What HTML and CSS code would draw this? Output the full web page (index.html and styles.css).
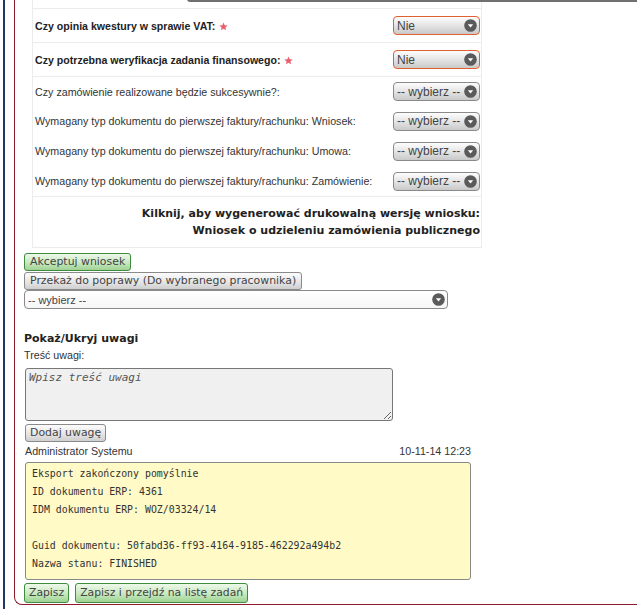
FILE: index.html
```html
<!DOCTYPE html>
<html lang="pl">
    <head>
        <meta charset="UTF-8" />
        <link rel="stylesheet" href="styles.css">
        <title>Wniosek o udzielenie zamówienia publicznego</title>
    </head>

    <body>
        <div class="page">
            <section class="panel">
                <div class="fields">
                    <div class="row cut"><div class="cut-field"></div></div>
                    <div class="row tall sep">
                        <span class="label strong">Czy opinia kwestury w sprawie VAT:
                            <svg class="req" width="9" height="9" viewBox="0 0 10 10"><path d="M5 0.5 6.3 3.6 9.6 3.8 7.1 6 7.9 9.3 5 7.5 2.1 9.3 2.9 6 0.4 3.8 3.7 3.6Z" /></svg>
                        </span>
                        <span class="select invalid">Nie<svg class="arrow" width="13" height="13" viewBox="0 0 13 13"><circle cx="6.5" cy="6.5" r="6.3" /><path d="M3.8 5.2h5.4L6.5 8.4Z" /></svg></span>
                    </div>
                    <div class="row tall sep">
                        <span class="label strong">Czy potrzebna weryfikacja zadania finansowego:
                            <svg class="req" width="9" height="9" viewBox="0 0 10 10"><path d="M5 0.5 6.3 3.6 9.6 3.8 7.1 6 7.9 9.3 5 7.5 2.1 9.3 2.9 6 0.4 3.8 3.7 3.6Z" /></svg>
                        </span>
                        <span class="select invalid">Nie<svg class="arrow" width="13" height="13" viewBox="0 0 13 13"><circle cx="6.5" cy="6.5" r="6.3" /><path d="M3.8 5.2h5.4L6.5 8.4Z" /></svg></span>
                    </div>
                    <div class="row sep">
                        <span class="label">Czy zamówienie realizowane będzie sukcesywnie?:</span>
                        <span class="select">-- wybierz --<svg class="arrow" width="13" height="13" viewBox="0 0 13 13"><circle cx="6.5" cy="6.5" r="6.3" /><path d="M3.8 5.2h5.4L6.5 8.4Z" /></svg></span>
                    </div>
                    <div class="row">
                        <span class="label">Wymagany typ dokumentu do pierwszej faktury/rachunku: Wniosek:</span>
                        <span class="select">-- wybierz --<svg class="arrow" width="13" height="13" viewBox="0 0 13 13"><circle cx="6.5" cy="6.5" r="6.3" /><path d="M3.8 5.2h5.4L6.5 8.4Z" /></svg></span>
                    </div>
                    <div class="row">
                        <span class="label">Wymagany typ dokumentu do pierwszej faktury/rachunku: Umowa:</span>
                        <span class="select">-- wybierz --<svg class="arrow" width="13" height="13" viewBox="0 0 13 13"><circle cx="6.5" cy="6.5" r="6.3" /><path d="M3.8 5.2h5.4L6.5 8.4Z" /></svg></span>
                    </div>
                    <div class="row">
                        <span class="label">Wymagany typ dokumentu do pierwszej faktury/rachunku: Zamówienie:</span>
                        <span class="select">-- wybierz --<svg class="arrow" width="13" height="13" viewBox="0 0 13 13"><circle cx="6.5" cy="6.5" r="6.3" /><path d="M3.8 5.2h5.4L6.5 8.4Z" /></svg></span>
                    </div>
                    <div class="row print sep">
                        <p>Kilknij, aby wygenerować drukowalną wersję wniosku:</p>
                        <p>Wniosek o udzieleniu zamówienia publicznego</p>
                    </div>
                </div>

                <div class="actions">
                    <button class="btn green">Akceptuj wniosek</button>
                    <button class="btn">Przekaż do poprawy (Do wybranego pracownika)</button>
                    <span class="select wide">-- wybierz --<svg class="arrow" width="13" height="13" viewBox="0 0 13 13"><circle cx="6.5" cy="6.5" r="6.3" /><path d="M3.8 5.2h5.4L6.5 8.4Z" /></svg></span>
                </div>

                <h3 class="notes-title">Pokaż/Ukryj uwagi</h3>
                <p class="notes-label">Treść uwagi:</p>
                <textarea class="note-input" placeholder="Wpisz treść uwagi"></textarea>
                <button class="btn add-note">Dodaj uwagę</button>

                <div class="note">
                    <div class="note-head">
                        <span>Administrator Systemu</span>
                        <span>10-11-14 12:23</span>
                    </div>
                    <div class="note-body">Eksport zakończony pomyślnie
ID dokumentu ERP: 4361
IDM dokumentu ERP: WOZ/03324/14

Guid dokumentu: 50fabd36-ff93-4164-9185-462292a494b2
Nazwa stanu: FINISHED</div>
                </div>

                <div class="save">
                    <button class="btn green">Zapisz</button>
                    <button class="btn green">Zapisz i przejdź na listę zadań</button>
                </div>
            </section>
        </div>
    </body>
</html>
```

FILE: styles.css
```css
html,
body {
    margin: 0;
    background: #fff;
    overflow: hidden;
}

body {
    font-family: "Liberation Sans", Arial, sans-serif;
    font-size: 10.7px;
    color: #333;
}

.page {
    margin-left: 3px;
    border-left: 2px solid #1e3a60;
    padding-left: 9px;
    min-height: 609px;
}

.panel {
    border-left: 1px solid #8e1b2b;
    border-bottom: 1px solid #8e1b2b;
    border-bottom-left-radius: 8px;
    padding: 0 0 1px 9px;
}

/* form table */
.fields {
    margin-left: 8px;
    width: 448px;
    border-left: 1px solid #ececec;
    border-right: 1px solid #ececec;
}

.row {
    box-sizing: border-box;
    height: 30px;
    display: flex;
    align-items: center;
    justify-content: space-between;
    padding: 0 1px 0 2px;
}

.row.sep {
    border-top: 1px solid #ececec;
}

.row.tall {
    height: 34px;
}

.row.cut {
    height: 8px;
    align-items: flex-start;
    padding: 0;
}

.cut-field {
    margin: -4px 0 0 154px;
    width: 450px;
    height: 4px;
    flex-shrink: 0;
    border-left: 1px solid #707070;
    border-bottom: 2px solid #707070;
    border-bottom-left-radius: 3px;
}

.label {
    color: #333;
}

.label.strong {
    font-weight: bold;
    font-size: 10.6px;
    color: #222;
}

.req {
    fill: #e8606c;
    vertical-align: -1px;
    margin-left: 1px;
}

.select {
    box-sizing: border-box;
    width: 87px;
    height: 19px;
    display: flex;
    align-items: center;
    justify-content: space-between;
    padding: 0 2px 0 3px;
    border: 1px solid #8a8a8a;
    border-radius: 4px;
    background: linear-gradient(#fdfdfd, #e2e2e2 55%, #c9c9c9);
    font-size: 12px;
    color: #444;
    white-space: nowrap;
}

.select.invalid {
    border-color: #e0612d;
}

.arrow circle {
    fill: #5a5a5a;
}

.arrow path {
    fill: #fff;
}

.print {
    height: 52px;
    flex-direction: column;
    justify-content: center;
    align-items: flex-end;
    border-bottom: 1px solid #ececec;
    font-family: "DejaVu Sans", Verdana, sans-serif;
    font-size: 11px;
    font-weight: bold;
    color: #222;
}

.print p {
    margin: 0;
    line-height: 17px;
}

/* buttons */
.btn {
    box-sizing: border-box;
    height: 18px;
    padding: 0 5px;
    border: 1px solid #8a8a8a;
    border-radius: 3px;
    background: linear-gradient(#fcfcfc, #e4e4e4 60%, #cfcfcf);
    font-family: "DejaVu Sans", Verdana, sans-serif;
    font-size: 10.9px;
    line-height: 16px;
    color: #444;
}

.btn.green {
    border-color: #3f8c3f;
    background: linear-gradient(#eef9ea, #c7e8bf 55%, #9fd393);
}

.actions {
    margin-top: 5px;
    display: flex;
    flex-direction: column;
    align-items: flex-start;
    gap: 1px;
}

.select.wide {
    width: 424px;
    height: 19px;
    margin-top: -1px;
    background: linear-gradient(#fff, #f6f6f6);
    font-size: 11px;
    padding-left: 3px;
}

/* notes */
.notes-title {
    margin: 23px 0 0;
    font-family: "DejaVu Sans", Verdana, sans-serif;
    font-size: 11px;
    line-height: 14px;
    color: #222;
}

.notes-label {
    margin: 3px 0 0;
    line-height: 13px;
}

.note-input {
    display: block;
    box-sizing: border-box;
    width: 368px;
    height: 53px;
    margin: 6px 0 0 1px;
    padding: 2px 3px;
    border: 1px solid #777;
    border-radius: 3px;
    background: #f0f0f0;
    font-family: "DejaVu Sans Mono", monospace;
    font-size: 11px;
    font-style: italic;
    resize: both;
}

.note-input::placeholder {
    color: #555;
}

.btn.add-note {
    display: block;
    margin: 3px 0 0 1px;
    height: 18px;
    padding: 0 4px;
}

.note {
    width: 446px;
    margin: 3px 0 0 1px;
}

.note-head {
    display: flex;
    justify-content: space-between;
    line-height: 13px;
}

.note-body {
    margin-top: 4px;
    padding: 2px 6px 6px;
    border: 1px solid #888;
    border-radius: 3px;
    background: #fffac6;
    font-family: "DejaVu Sans Mono", monospace;
    font-size: 9.9px;
    line-height: 18px;
    white-space: pre;
    color: #333;
}

.save {
    margin-top: 3px;
    display: flex;
    gap: 6px;
}

.save .btn {
    height: 20px;
    padding: 0 4px;
    font-size: 10.8px;
}
```
